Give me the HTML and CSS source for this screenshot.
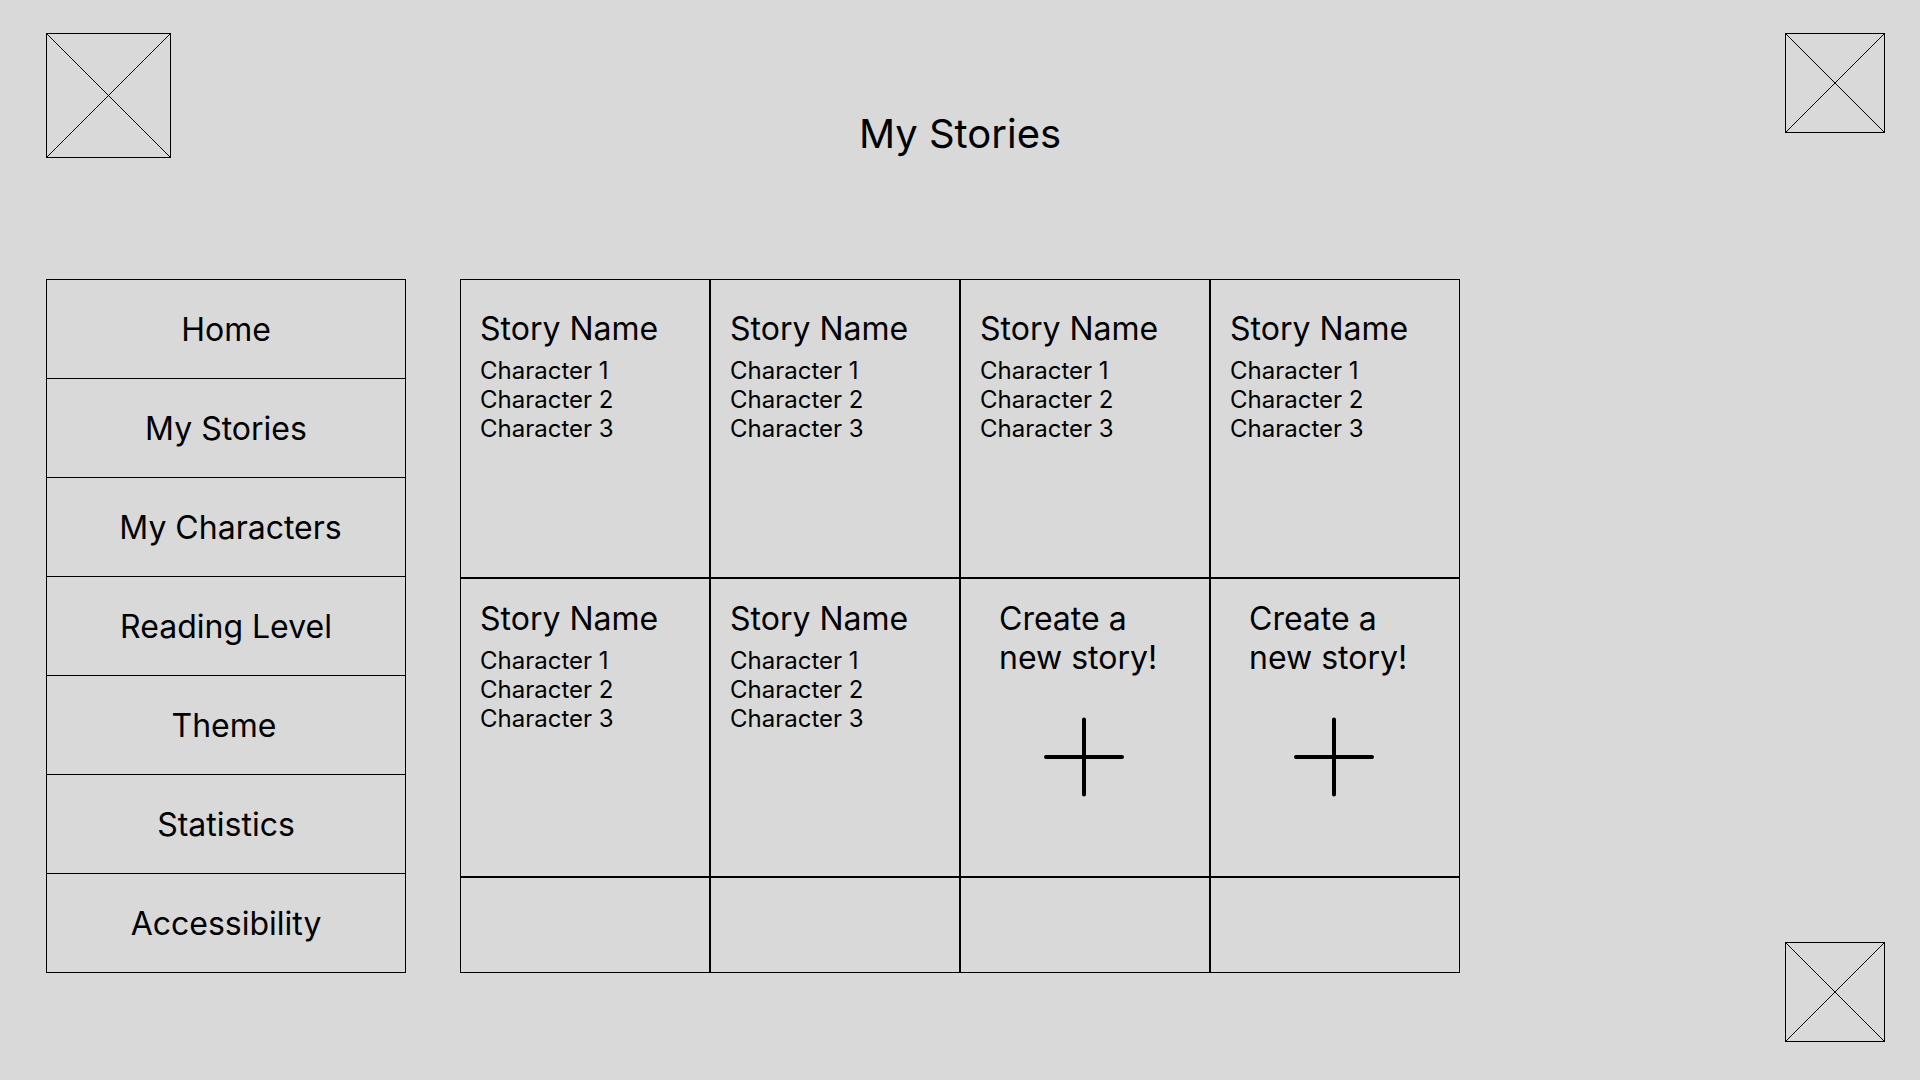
FILE: index.html
```html
<!DOCTYPE html>
<html lang="en">
<head>
<meta charset="utf-8">
<title>My Stories</title>
<link rel="stylesheet" href="styles.css">
</head>
<body>
<header class="top">
  <svg class="ph ph-large" viewBox="0 0 125 125" aria-hidden="true">
    <rect x="0.5" y="0.5" width="124" height="124"/>
    <line x1="0.5" y1="0.5" x2="124.5" y2="124.5"/>
    <line x1="124.5" y1="0.5" x2="0.5" y2="124.5"/>
  </svg>
  <h1 class="title">My Stories</h1>
  <svg class="ph ph-small ph-right" viewBox="0 0 100 100" aria-hidden="true">
    <rect x="0.5" y="0.5" width="99" height="99"/>
    <line x1="0.5" y1="0.5" x2="99.5" y2="99.5"/>
    <line x1="99.5" y1="0.5" x2="0.5" y2="99.5"/>
  </svg>
</header>
<main class="main">
  <nav class="sidebar">
    <div class="nav-item">Home</div>
    <div class="nav-item">My Stories</div>
    <div class="nav-item nav-shift">My Characters</div>
    <div class="nav-item">Reading Level</div>
    <div class="nav-item nav-shift-left">Theme</div>
    <div class="nav-item">Statistics</div>
    <div class="nav-item">Accessibility</div>
  </nav>
  <section class="stories">
    <div class="cell row1">
      <div class="story-name">Story Name</div>
      <div class="chars">Character 1<br>Character 2<br>Character 3</div>
    </div>
    <div class="cell row1">
      <div class="story-name">Story Name</div>
      <div class="chars">Character 1<br>Character 2<br>Character 3</div>
    </div>
    <div class="cell row1">
      <div class="story-name">Story Name</div>
      <div class="chars">Character 1<br>Character 2<br>Character 3</div>
    </div>
    <div class="cell row1">
      <div class="story-name">Story Name</div>
      <div class="chars">Character 1<br>Character 2<br>Character 3</div>
    </div>
    <div class="cell row2">
      <div class="story-name">Story Name</div>
      <div class="chars">Character 1<br>Character 2<br>Character 3</div>
    </div>
    <div class="cell row2">
      <div class="story-name">Story Name</div>
      <div class="chars">Character 1<br>Character 2<br>Character 3</div>
    </div>
    <div class="cell row2 create">
      <div class="create-text">Create a<br>new story!</div>
      <svg class="plus" viewBox="0 0 80 80" aria-hidden="true">
        <path d="M40 2.5V77.5M2 40H78"/>
      </svg>
    </div>
    <div class="cell row2 create">
      <div class="create-text">Create a<br>new story!</div>
      <svg class="plus" viewBox="0 0 80 80" aria-hidden="true">
        <path d="M40 2.5V77.5M2 40H78"/>
      </svg>
    </div>
    <div class="cell row3"></div>
    <div class="cell row3"></div>
    <div class="cell row3"></div>
    <div class="cell row3"></div>
  </section>
  <aside class="aside">
    <svg class="ph ph-small" viewBox="0 0 100 100" aria-hidden="true">
      <rect x="0.5" y="0.5" width="99" height="99"/>
      <line x1="0.5" y1="0.5" x2="99.5" y2="99.5"/>
      <line x1="99.5" y1="0.5" x2="0.5" y2="99.5"/>
    </svg>
  </aside>
</main>
</body>
</html>
```

FILE: styles.css
```css
* {
  box-sizing: border-box;
}

html, body {
  margin: 0;
  padding: 0;
}

body {
  width: 1920px;
  height: 1080px;
  overflow: hidden;
  background: #d9d9d9;
  color: #000;
  font-family: Inter, "Noto Sans", "Liberation Sans", sans-serif;
}

.top {
  display: grid;
  grid-template-columns: 1fr auto 1fr;
  align-items: start;
  padding-top: 33px;
  height: 158px;
}

.ph {
  display: block;
  fill: none;
  stroke: #000;
  stroke-width: 1;
}

.ph-large {
  width: 125px;
  height: 125px;
  margin-left: 46px;
}

.ph-small {
  width: 100px;
  height: 100px;
}

.ph-right {
  justify-self: end;
  margin-right: 35px;
}

.title {
  margin: 77px 0 0;
  font-size: 40px;
  font-weight: 400;
  line-height: 48px;
  text-align: center;
}

.main {
  display: flex;
  align-items: flex-start;
  margin-top: 121px;
  padding-left: 46px;
}

.sidebar {
  width: 360px;
  border: 1px solid #000;
  display: flex;
  flex-direction: column;
}

.nav-item {
  box-sizing: content-box;
  height: 98px;
  display: flex;
  align-items: center;
  justify-content: center;
  font-size: 32px;
  line-height: 39px;
}

.nav-item + .nav-item {
  border-top: 1px solid #000;
}

.nav-shift {
  padding-left: 9px;
}

.nav-shift-left {
  padding-right: 4px;
}

.stories {
  margin-left: 54px;
  width: 1000px;
  display: grid;
  grid-template-columns: repeat(4, 250px);
  grid-template-rows: 299px 299px 96px;
}

.cell {
  border: 1px solid #000;
  padding-left: 19px;
}

.row1 {
  padding-top: 29px;
}

.row2 {
  padding-top: 20px;
}

.story-name {
  font-size: 32px;
  line-height: 39px;
  margin-bottom: 8px;
}

.chars {
  font-size: 24px;
  line-height: 29px;
}

.create {
  padding-left: 38px;
  padding-top: 21px;
}

.create-text {
  font-size: 32px;
  line-height: 38.5px;
}

.plus {
  display: block;
  width: 80px;
  height: 80px;
  margin: 40px 0 0 45px;
  fill: none;
  stroke: #000;
  stroke-width: 4;
  stroke-linecap: round;
}

.aside {
  flex: 1;
  display: flex;
  justify-content: flex-end;
  padding-top: 663px;
  padding-right: 35px;
}
```
